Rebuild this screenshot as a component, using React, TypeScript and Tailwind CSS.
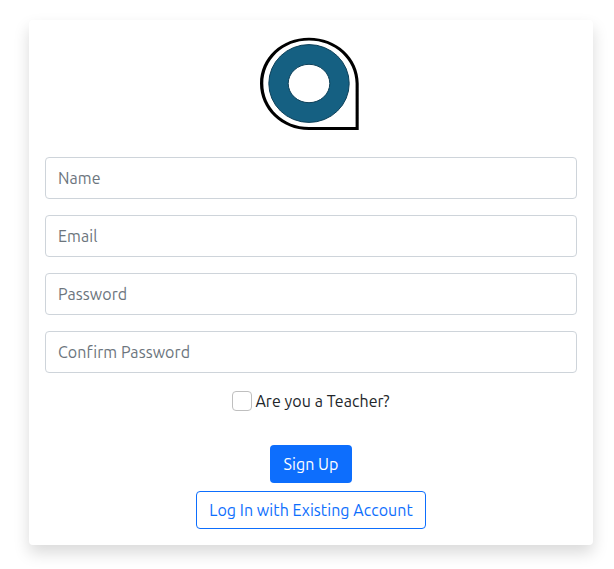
const fields = [
  { label: "Name", type: "text" },
  { label: "Email", type: "email" },
  { label: "Password", type: "password" },
  { label: "Confirm Password", type: "password" },
];

function Logo() {
  return (
    <svg width="104" height="94" viewBox="0 0 104 94" className="block" aria-hidden="true">
      <path
        fillRule="evenodd"
        d="M99.7 46.5V93H50C22.5 93 1 72 1 46.5S22.5 0.8 50 0.8S99.7 21 99.7 46.5ZM96.6 46.5C96.6 22.6 75.8 3.4 50 3.4S4.3 22.6 4.3 46.5S24.2 90.1 50 90.1H96.6Z"
        fill="#000"
      />
      <ellipse cx="50" cy="46.5" rx="40.2" ry="38.9" fill="#156082" stroke="#0d4059" strokeWidth="1" />
      <ellipse cx="50" cy="46.5" rx="20.8" ry="19.2" fill="#fff" stroke="#0d4059" strokeWidth="1" />
    </svg>
  );
}

export default function App() {
  return (
    <main className="h-[569px] w-[614px] overflow-hidden bg-white pt-5 pl-[29px] font-['Ubuntu','Noto_Sans',sans-serif] text-base tracking-[0.06px] text-[#212529]">
      <form className="flex h-[525px] w-[564px] flex-col items-center rounded bg-white px-4 pt-[17px] shadow-[0_8px_16px_rgba(0,0,0,0.15)]">
        <Logo />
        <div className="mt-[26px] flex w-full flex-col gap-4">
          {fields.map((field) => (
            <input
              key={field.label}
              type={field.type}
              placeholder={field.label}
              aria-label={field.label}
              className="h-[42px] w-full rounded border border-[#ced4da] bg-white px-3 placeholder:text-[#6c757d]"
            />
          ))}
        </div>
        <label className="mt-4 flex h-6 items-center gap-[3px]">
          <input type="checkbox" className="size-5 appearance-none rounded border border-[#bfbfbf] bg-white" />
          <span className="whitespace-nowrap">Are you a Teacher?</span>
        </label>
        <button type="submit" className="mt-8 h-[38px] w-[82px] rounded bg-[#0d6efd] whitespace-nowrap text-white">
          Sign Up
        </button>
        <button type="button" className="mt-2 h-[38px] w-[230px] rounded border border-[#0d6efd] whitespace-nowrap text-[#0d6efd]">
          Log In with Existing Account
        </button>
      </form>
    </main>
  );
}
